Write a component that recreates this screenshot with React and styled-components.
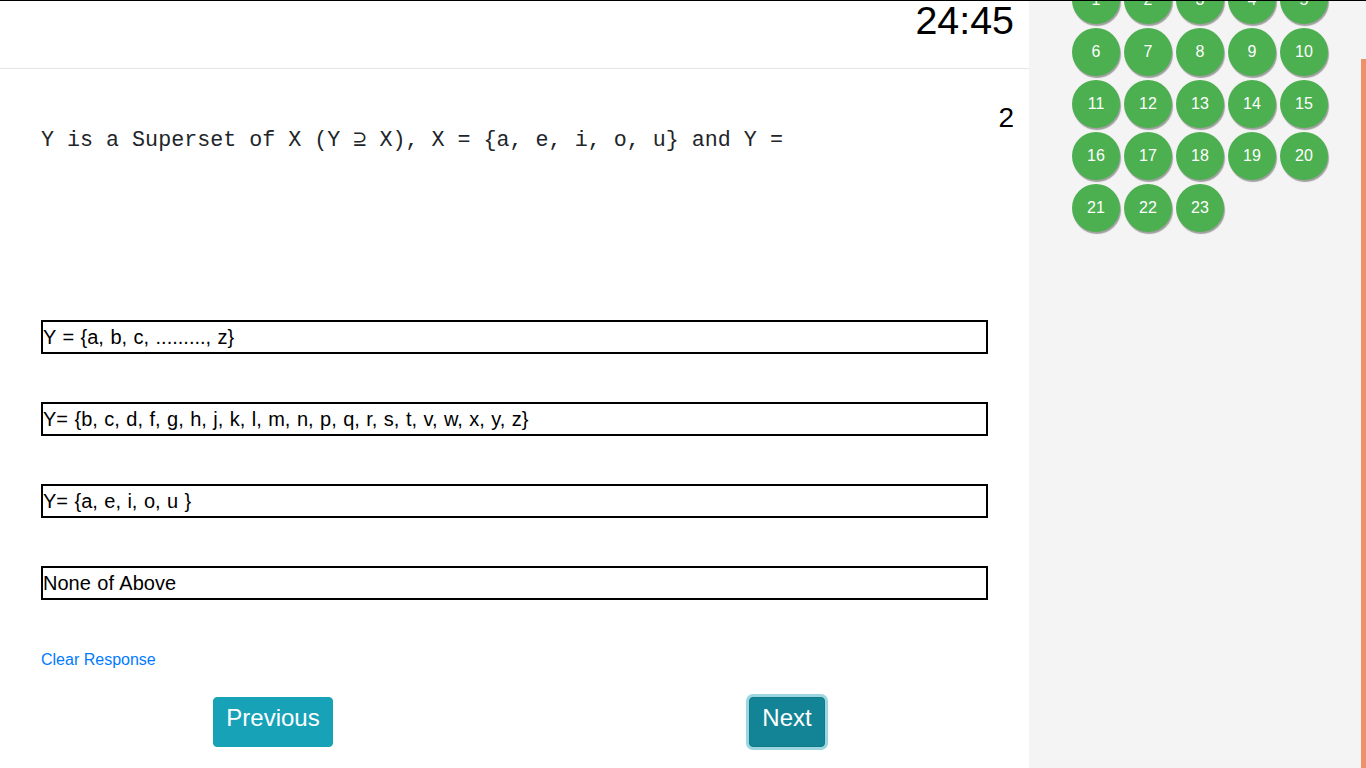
import React from 'react';
import styled, { createGlobalStyle } from 'styled-components';

const GlobalStyle = createGlobalStyle`
    body {
        margin: 0;
        font-family: "Liberation Sans", Arial, sans-serif;
        color: #212529;
        background: #fff;
    }
`;

const Page = styled.div`
    display: flex;
    height: 767px;
    border-top: 1px solid #000;
    overflow: hidden;
`;

const Main = styled.main`
    width: 1029px;
    flex: none;
    background: #fff;
`;

const Header = styled.header`
    height: 68px;
    border-bottom: 1px solid #e5e5e5;
    padding-right: 15px;
    text-align: right;
`;

const Timer = styled.div`
    font-size: 39.4px;
    line-height: 40px;
    color: #000;
    margin-top: -1px;
`;

const QuestionRow = styled.div`
    display: flex;
    justify-content: space-between;
    align-items: flex-start;
    margin-top: 32px;
    padding: 0 15px 0 41px;
`;

const QuestionText = styled.p`
    margin: 0;
    padding-top: 28px;
    font-family: "Liberation Mono", "DejaVu Sans Mono", monospace;
    font-size: 21.7px;
    line-height: 24px;
    color: #212529;
`;

const QuestionNumber = styled.span`
    font-size: 28px;
    line-height: 1.2;
    color: #000;
`;

const Options = styled.div`
    display: flex;
    flex-direction: column;
    gap: 48px;
    margin: 167px 41px 0;
`;

const Option = styled.div`
    border: 2px solid #000;
    font-size: 20px;
    line-height: 30px;
    word-spacing: 0.9px;
    color: #000;
    cursor: pointer;
`;

const ClearLink = styled.a`
    display: block;
    margin: 48px 41px 0;
    font-size: 16px;
    line-height: 24px;
    color: #007bff;
    text-decoration: none;
`;

const ButtonRow = styled.div`
    display: grid;
    grid-template-columns: 514px 514px;
    margin: 25px 0 0 16px;
`;

const Cell = styled.div`
    display: flex;
    justify-content: center;
`;

const NavButton = styled.button`
    font-family: "Liberation Sans", Arial, sans-serif;
    font-size: 24px;
    line-height: 36px;
    padding: 2px 12px 10px;
    color: #fff;
    border: 1px solid ${p => (p.$active ? '#117a8b' : '#17a2b8')};
    border-radius: 4px;
    background: ${p => (p.$active ? '#138496' : '#17a2b8')};
    box-shadow: ${p => (p.$active ? '0 0 0 3px rgba(58, 176, 195, 0.5)' : 'none')};
    cursor: pointer;
`;

const Sidebar = styled.aside`
    flex: 1;
    display: flex;
    background: #f4f4f4;
    overflow: hidden;
`;

const Palette = styled.div`
    flex: 1;
    display: grid;
    grid-template-columns: repeat(5, 48px);
    grid-auto-rows: 48px;
    gap: 4px;
    align-content: start;
    margin-top: -25px;
    padding-left: 43px;
`;

const Bubble = styled.div`
    display: flex;
    align-items: center;
    justify-content: center;
    border-radius: 50%;
    background: ${p => (p.$answered ? '#4caf50' : '#bdbdbd')};
    color: #fff;
    font-size: 16px;
    box-shadow: 1px 2px 1px rgba(0, 0, 0, 0.35);
    cursor: pointer;
`;

const Accent = styled.div`
    width: 5px;
    margin-top: 58px;
    background: #f0906a;
`;

const options = [
    'Y = {a, b, c, ........., z}',
    'Y= {b, c, d, f, g, h, j, k, l, m, n, p, q, r, s, t, v, w, x, y, z}',
    'Y= {a, e, i, o, u }',
    'None of Above',
];

const questions = Array.from({ length: 23 }, (_, i) => i + 1);

const App = () => (
    <>
        <GlobalStyle />
        <Page>
            <Main>
                <Header>
                    <Timer>24:45</Timer>
                </Header>
                <QuestionRow>
                    <QuestionText>Y is a Superset of X (Y ⊇ X), X = {'{'}a, e, i, o, u{'}'} and Y =</QuestionText>
                    <QuestionNumber>2</QuestionNumber>
                </QuestionRow>
                <Options>
                    {options.map(text => (
                        <Option key={text}>{text}</Option>
                    ))}
                </Options>
                <ClearLink href="#">Clear Response</ClearLink>
                <ButtonRow>
                    <Cell>
                        <NavButton>Previous</NavButton>
                    </Cell>
                    <Cell>
                        <NavButton $active>Next</NavButton>
                    </Cell>
                </ButtonRow>
            </Main>
            <Sidebar>
                <Palette>
                    {questions.map(n => (
                        <Bubble key={n} $answered>{n}</Bubble>
                    ))}
                </Palette>
                <Accent />
            </Sidebar>
        </Page>
    </>
);

export default App;
